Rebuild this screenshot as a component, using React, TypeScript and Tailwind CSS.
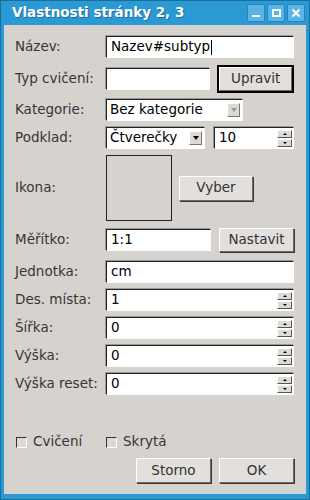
import React from 'react';

// sunken white entry field border
const FIELD =
  'bg-white border border-t-[#222] border-l-[#222] border-b-white border-r-white shadow-[-1px_-1px_0_#9c9894] flex items-center';
// raised push button
const BTN =
  'bg-[#e2dfdc] border border-t-white border-l-white border-b-[#6e6a66] border-r-[#6e6a66] shadow-[1px_1px_0_#3c3a38] flex items-center justify-center text-[#333]';

function Label({ children }: { children: React.ReactNode }) {
  return <div className="w-[91px] shrink-0 text-[#363636]">{children}</div>;
}

function ArrowBtn({ up }: { up?: boolean }) {
  return (
    <div className="w-[15px] h-[8px] bg-[#dedad6] border border-t-white border-l-white border-b-[#555] border-r-[#555] flex items-center justify-center">
      {up ? (
        <div className="w-0 h-0 border-x-[2px] border-x-transparent border-b-[2px] border-b-black" />
      ) : (
        <div className="w-0 h-0 border-x-[2px] border-x-transparent border-t-[2px] border-t-black" />
      )}
    </div>
  );
}

function Spin({ value, className }: { value: string; className: string }) {
  return (
    <div className={`${FIELD} ${className} h-[22px]`}>
      <span className="flex-1 pl-[4px]">{value}</span>
      <div className="flex flex-col gap-[1px] mr-[1px]">
        <ArrowBtn up />
        <ArrowBtn />
      </div>
    </div>
  );
}

function Select({ value, className, disabled }: { value: string; className: string; disabled?: boolean }) {
  return (
    <div className={`${FIELD} ${className} h-[22px]`}>
      <span className="flex-1 pl-[3px]">{value}</span>
      <div className="w-[13px] h-[14px] mr-[2px] bg-[#dedad6] border border-t-white border-l-white border-b-[#777] border-r-[#777] flex items-center justify-center">
        <div
          className={`w-0 h-0 border-x-[3px] border-x-transparent border-t-[4px] ${disabled ? 'border-t-[#9c9894]' : 'border-t-black'}`}
        />
      </div>
    </div>
  );
}

function Check({ label }: { label: string }) {
  return (
    <div className="flex items-center gap-[6px]">
      <div className="w-[11px] h-[11px] bg-[#dcd8d4] border border-t-[#333] border-l-[#333] border-b-white border-r-white" />
      <span className="text-[#363636]">{label}</span>
    </div>
  );
}

export default function App() {
  return (
    <div className="w-[310px] h-[500px] bg-[#2b99d4] border border-[#1c6c9c] flex flex-col font-['DejaVu_Sans',sans-serif] text-[13.5px] leading-none">
      {/* title bar */}
      <div className="h-[24px] shrink-0 flex items-center pl-[11px] pr-[4px]">
        <span className="flex-1 text-white font-bold text-[13.5px] [text-shadow:1px_1px_0_#1d6e9e]">
          Vlastnosti stránky 2, 3
        </span>
        <div className="flex gap-[2px]">
          <div className="w-[18px] h-[18px] rounded-[2px] bg-[#59b5e6] border border-[#2782ba] flex items-end justify-center pb-[4px]">
            <div className="w-[8px] h-[2px] bg-white" />
          </div>
          <div className="w-[18px] h-[18px] rounded-[2px] bg-[#59b5e6] border border-[#2782ba] flex items-center justify-center">
            <div className="w-[9px] h-[8px] border-2 border-white" />
          </div>
          <div className="w-[18px] h-[18px] rounded-[2px] bg-[#59b5e6] border border-[#2782ba] flex items-center justify-center">
            <svg width="10" height="10" viewBox="0 0 10 10">
              <path d="M1.5 1.5 L8.5 8.5 M8.5 1.5 L1.5 8.5" stroke="white" strokeWidth="2.2" />
            </svg>
          </div>
        </div>
      </div>

      {/* content */}
      <div className="flex-1 mx-[3px] mb-[5px] bg-[#d6d2ce] flex flex-col pl-[11px] pr-[12px] pt-[11px]">
        <div className="flex items-center h-[22px]">
          <Label>Název:</Label>
          <div className={`${FIELD} w-[188px] h-[22px] pl-[4px]`}>
            <span>Nazev#subtyp</span>
            <span className="w-px h-[15px] bg-black ml-px" />
          </div>
        </div>

        <div className="flex items-center h-[28px] mt-[7px]">
          <Label>Typ cvičení:</Label>
          <div className={`${FIELD} w-[105px] h-[22px]`} />
          <div className="ml-[7px] w-[77px] h-[28px] border-2 border-black flex">
            <div className={`${BTN} flex-1 shadow-none`}>Upravit</div>
          </div>
        </div>

        <div className="flex items-center h-[22px] mt-[6px]">
          <Label>Kategorie:</Label>
          <Select value="Bez kategorie" className="w-[137px]" disabled />
        </div>

        <div className="flex items-center h-[22px] mt-[6px]">
          <Label>Podklad:</Label>
          <Select value="Čtverečky" className="w-[99px]" />
          <Spin value="10" className="w-[80px] ml-[9px]" />
        </div>

        <div className="flex items-center h-[66px] mt-[6px]">
          <Label>Ikona:</Label>
          <div className="w-[66px] h-[66px] border border-[#222]" />
          <div className={`${BTN} ml-[7px] w-[74px] h-[25px]`}>Vyber</div>
        </div>

        <div className="flex items-center h-[24px] mt-[7px]">
          <Label>Měřítko:</Label>
          <div className={`${FIELD} w-[105px] h-[22px] pl-[4px]`}>1:1</div>
          <div className={`${BTN} ml-[8px] w-[75px] h-[24px]`}>Nastavit</div>
        </div>

        <div className="flex items-center h-[22px] mt-[9px]">
          <Label>Jednotka:</Label>
          <div className={`${FIELD} w-[188px] h-[22px] pl-[4px]`}>cm</div>
        </div>

        <div className="flex items-center h-[22px] mt-[6px]">
          <Label>Des. místa:</Label>
          <Spin value="1" className="w-[188px]" />
        </div>

        <div className="flex items-center h-[22px] mt-[6px]">
          <Label>Šířka:</Label>
          <Spin value="0" className="w-[188px]" />
        </div>

        <div className="flex items-center h-[22px] mt-[6px]">
          <Label>Výška:</Label>
          <Spin value="0" className="w-[188px]" />
        </div>

        <div className="flex items-center h-[22px] mt-[6px]">
          <Label>Výška reset:</Label>
          <Spin value="0" className="w-[188px]" />
        </div>

        <div className="flex items-center h-[16px] mt-[39px] pl-[1px] gap-[0px]">
          <div className="w-[90px]">
            <Check label="Cvičení" />
          </div>
          <Check label="Skrytá" />
        </div>

        <div className="flex justify-end gap-[8px] mt-[8px]">
          <div className={`${BTN} w-[75px] h-[25px]`}>Storno</div>
          <div className={`${BTN} w-[75px] h-[25px]`}>OK</div>
        </div>
      </div>
    </div>
  );
}
